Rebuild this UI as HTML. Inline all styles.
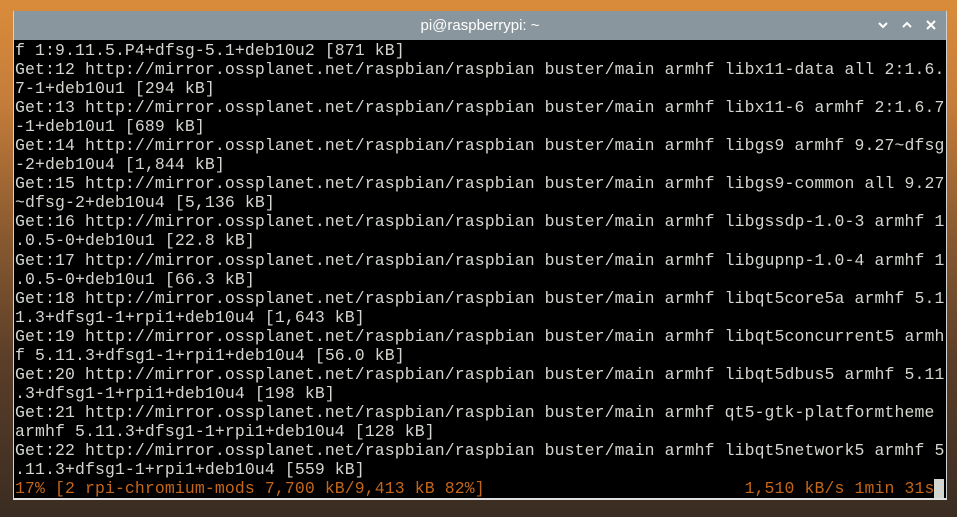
<!DOCTYPE html>
<html><head><meta charset="utf-8"><style>
html,body{margin:0;padding:0}
body{width:957px;height:517px;overflow:hidden;position:relative;
background:linear-gradient(180deg,#d98c3a 0%,#c47c3a 20%,#8a5a30 45%,#5a3e28 70%,#3a2c22 100%);}
.win{position:absolute;left:13px;top:11px;width:934px;height:489px;background:#000;border-left:1px solid #cfd3d5;border-right:1px solid #cfd3d5;border-bottom:2px solid #e0e0e0;box-sizing:border-box;overflow:hidden}
.tb{position:absolute;left:0;top:0;right:0;height:29px;background:#8a969d;color:#fff;font:15px "Liberation Sans",sans-serif;text-align:center;line-height:29px}
.btn{position:absolute;top:0}
pre{position:absolute;left:1px;top:30px;margin:0;font:16.45px/19.05px "Liberation Mono",monospace;letter-spacing:0.13px;color:#d3d7cf;white-space:pre}
.o{color:#c4661a}
.cur{background:#d3d7cf;color:#000}
</style></head><body>
<div class="win">
<div class="tb">pi@raspberrypi: ~</div>
<svg class="btn" style="left:864px;top:10px" width="10" height="8"><path d="M1 2 L5 6 L9 2" stroke="#fff" stroke-width="2" fill="none"/></svg>
<svg class="btn" style="left:888px;top:10px" width="10" height="8"><path d="M1 6 L5 2 L9 6" stroke="#fff" stroke-width="2" fill="none"/></svg>
<svg class="btn" style="left:912px;top:9px" width="10" height="10"><path d="M1 1 L9 9 M9 1 L1 9" stroke="#fff" stroke-width="2" fill="none"/></svg>
<pre>f 1:9.11.5.P4+dfsg-5.1+deb10u2 [871 kB]
Get:12 http://mirror.ossplanet.net/raspbian/raspbian buster/main armhf libx11-data all 2:1.6.
7-1+deb10u1 [294 kB]
Get:13 http://mirror.ossplanet.net/raspbian/raspbian buster/main armhf libx11-6 armhf 2:1.6.7
-1+deb10u1 [689 kB]
Get:14 http://mirror.ossplanet.net/raspbian/raspbian buster/main armhf libgs9 armhf 9.27~dfsg
-2+deb10u4 [1,844 kB]
Get:15 http://mirror.ossplanet.net/raspbian/raspbian buster/main armhf libgs9-common all 9.27
~dfsg-2+deb10u4 [5,136 kB]
Get:16 http://mirror.ossplanet.net/raspbian/raspbian buster/main armhf libgssdp-1.0-3 armhf 1
.0.5-0+deb10u1 [22.8 kB]
Get:17 http://mirror.ossplanet.net/raspbian/raspbian buster/main armhf libgupnp-1.0-4 armhf 1
.0.5-0+deb10u1 [66.3 kB]
Get:18 http://mirror.ossplanet.net/raspbian/raspbian buster/main armhf libqt5core5a armhf 5.1
1.3+dfsg1-1+rpi1+deb10u4 [1,643 kB]
Get:19 http://mirror.ossplanet.net/raspbian/raspbian buster/main armhf libqt5concurrent5 armh
f 5.11.3+dfsg1-1+rpi1+deb10u4 [56.0 kB]
Get:20 http://mirror.ossplanet.net/raspbian/raspbian buster/main armhf libqt5dbus5 armhf 5.11
.3+dfsg1-1+rpi1+deb10u4 [198 kB]
Get:21 http://mirror.ossplanet.net/raspbian/raspbian buster/main armhf qt5-gtk-platformtheme
armhf 5.11.3+dfsg1-1+rpi1+deb10u4 [128 kB]
Get:22 http://mirror.ossplanet.net/raspbian/raspbian buster/main armhf libqt5network5 armhf 5
.11.3+dfsg1-1+rpi1+deb10u4 [559 kB]
<span class="o">17% [2 rpi-chromium-mods 7,700 kB/9,413 kB 82%]                          1,510 kB/s 1min 31s</span><span class="cur"> </span></pre>
</div>
</body></html>
